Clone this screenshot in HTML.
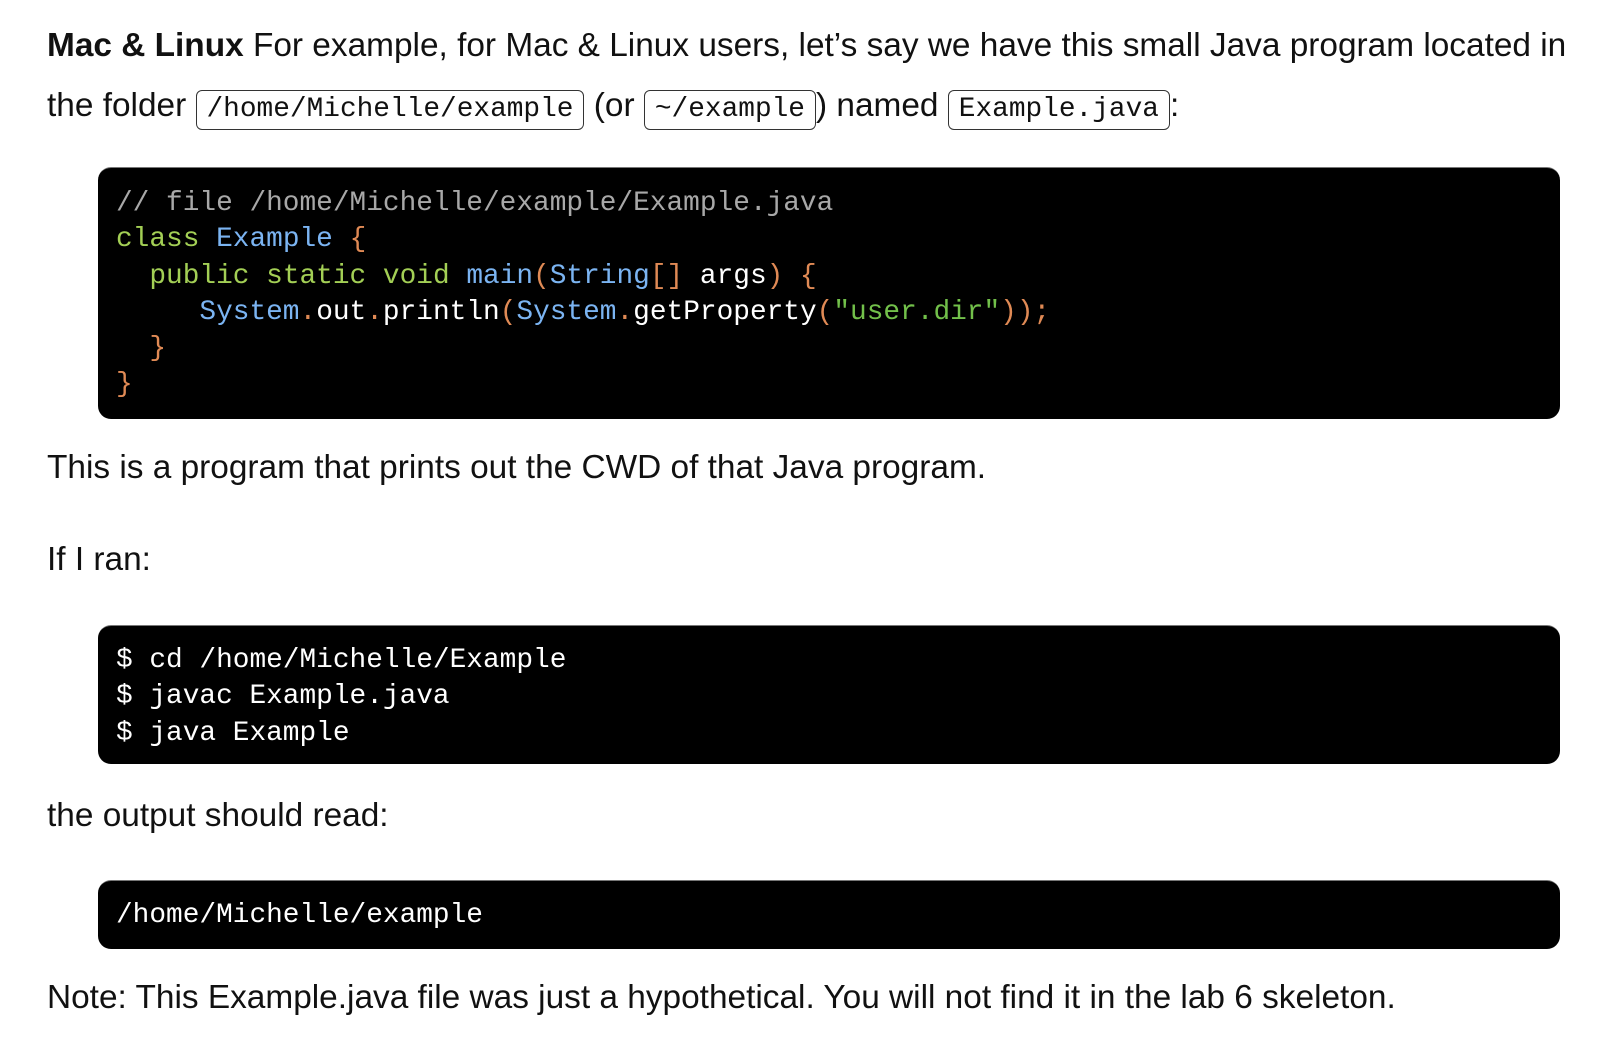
<!DOCTYPE html>
<html><head><meta charset="utf-8"><style>
body{margin:0;width:1621px;height:1042px;background:#fff;position:relative;overflow:hidden;font-family:"Liberation Sans",Arial,sans-serif;color:#111;}
.t{position:absolute;left:47px;font-size:33.4px;line-height:40px;white-space:nowrap;}
code{font-family:"Liberation Mono",monospace;font-size:27.8px;border:1.5px solid #333;border-radius:6px;padding:3px 10px 4px;}
.b{position:absolute;left:98px;width:1462px;background:#000;border-radius:13px;border-top:1px solid #777;box-sizing:border-box;}
pre{margin:0;position:absolute;left:18px;font-family:"Liberation Mono",monospace;font-size:27.8px;line-height:36.3px;color:#fff;}
.c{color:#a8a8a8}.k{color:#a3cf55}.n{color:#7bb4f2}.o{color:#e08a55}.s{color:#72c04a}
</style></head><body>
<div class="t" style="top:26px"><b>Mac &amp; Linux</b> For example, for Mac &amp; Linux users, let’s say we have this small Java program located in</div>
<div class="t" style="top:86px">the folder <code>/home/Michelle/example</code> (or <code>~/example</code>) named <code>Example.java</code>:</div>
<div class="b" style="top:167px;height:252px"><pre style="top:18px"><span class="c">// file /home/Michelle/example/Example.java</span>
<span class="k">class</span> <span class="n">Example</span> <span class="o">{</span>
  <span class="k">public static void</span> <span class="n">main</span><span class="o">(</span><span class="n">String</span><span class="o">[]</span> args<span class="o">) {</span>
     <span class="n">System</span><span class="o">.</span>out<span class="o">.</span>println<span class="o">(</span><span class="n">System</span><span class="o">.</span>getProperty<span class="o">(</span><span class="s">"user.dir"</span><span class="o">));</span>
  <span class="o">}</span>
<span class="o">}</span></pre></div>
<div class="t" style="top:448px">This is a program that prints out the CWD of that Java program.</div>
<div class="t" style="top:540px">If I ran:</div>
<div class="b" style="top:625px;height:139px"><pre style="top:17px">$ cd /home/Michelle/Example
$ javac Example.java
$ java Example</pre></div>
<div class="t" style="top:796px">the output should read:</div>
<div class="b" style="top:880px;height:69px"><pre style="top:17px">/home/Michelle/example</pre></div>
<div class="t" style="top:978px">Note: This Example.java file was just a hypothetical. You will not find it in the lab 6 skeleton.</div>
</body></html>
